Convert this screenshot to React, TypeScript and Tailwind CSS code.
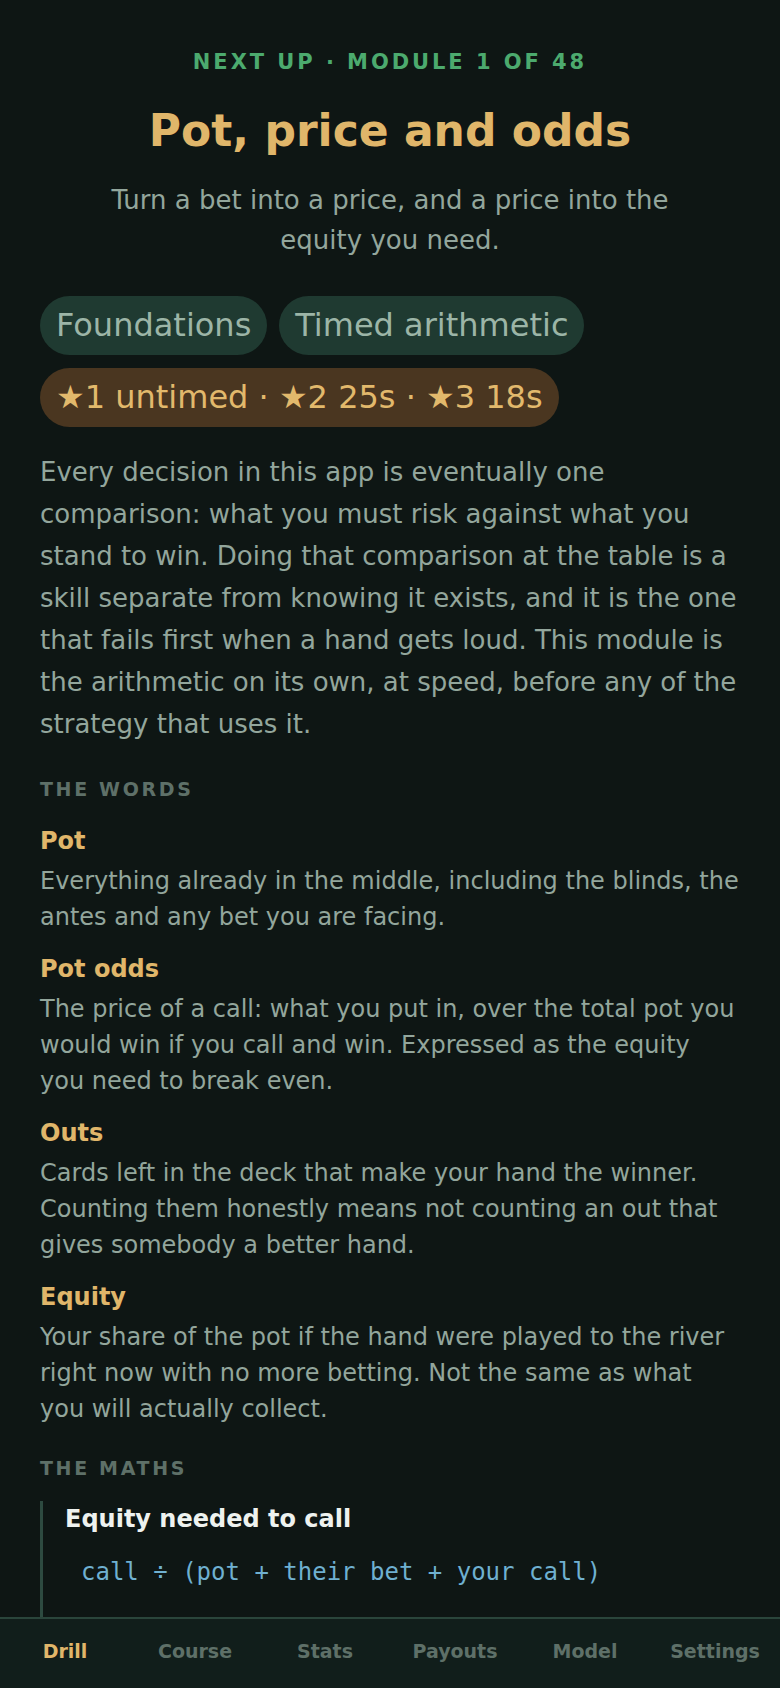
import React from 'react';

const terms = [
  {
    name: 'Pot',
    text: 'Everything already in the middle, including the blinds, the antes and any bet you are facing.',
  },
  {
    name: 'Pot odds',
    text: 'The price of a call: what you put in, over the total pot you would win if you call and win. Expressed as the equity you need to break even.',
  },
  {
    name: 'Outs',
    text: 'Cards left in the deck that make your hand the winner. Counting them honestly means not counting an out that gives somebody a better hand.',
  },
  {
    name: 'Equity',
    text: 'Your share of the pot if the hand were played to the river right now with no more betting. Not the same as what you will actually collect.',
  },
];

const tabs = ['Drill', 'Course', 'Stats', 'Payouts', 'Model', 'Settings'];

const App: React.FC = () => {
  return (
    <div
      className="h-[1688px] flex flex-col bg-[#0e1614] text-[#93a69c]"
      style={{ fontFamily: '"DejaVu Sans", Verdana, sans-serif' }}
    >
      <main className="flex-1 overflow-hidden px-[40px] pt-[48px]">
        {/* header */}
        <div className="text-center">
          <div className="text-[21px] leading-[28px] font-bold tracking-[0.14em] text-[#4caa6e]">
            NEXT UP · MODULE 1 OF 48
          </div>
          <h1 className="mt-[31px] text-[44px] leading-[48px] font-bold text-[#e0b66a]">
            Pot, price and odds
          </h1>
          <p className="mt-[25px] mx-auto max-w-[600px] text-[26px] leading-[40px] text-[#93a69c]">
            Turn a bet into a price, and a price into the equity you need.
          </p>
        </div>

        {/* tags */}
        <div className="mt-[36px] flex flex-wrap gap-x-[12px] gap-y-[13px]">
          <span className="rounded-full bg-[#1f3a31] px-[16px] py-[12px] text-[32px] leading-[35px] text-[#9cb5a7]">
            Foundations
          </span>
          <span className="rounded-full bg-[#1f3a31] px-[16px] py-[12px] text-[32px] leading-[35px] text-[#9cb5a7]">
            Timed arithmetic
          </span>
          <span className="rounded-full bg-[#4a3620] px-[16px] py-[12px] text-[32px] leading-[35px] text-[#e2b96c]">
            ★1 untimed · ★2 25s · ★3 18s
          </span>
        </div>

        <p className="mt-[24px] text-[26px] leading-[42px] text-[#93a69c]">
          Every decision in this app is eventually one comparison: what you must risk against what you stand to win.
          Doing that comparison at the table is a skill separate from knowing it exists, and it is the one that fails
          first when a hand gets loud. This module is the arithmetic on its own, at speed, before any of the strategy
          that uses it.
        </p>

        <h2 className="mt-[30px] text-[19px] leading-[28px] font-bold tracking-[0.14em] text-[#5e7068]">THE WORDS</h2>

        <dl className="mt-[22px] flex flex-col gap-[18px]">
          {terms.map(t => (
            <div key={t.name}>
              <dt className="text-[24px] leading-[32px] font-bold text-[#e0b66a]">{t.name}</dt>
              <dd className="mt-[6px] text-[24px] leading-[36px] text-[#93a69c]">{t.text}</dd>
            </div>
          ))}
        </dl>

        <h2 className="mt-[27px] text-[19px] leading-[28px] font-bold tracking-[0.14em] text-[#5e7068]">THE MATHS</h2>

        <div className="mt-[19px] border-l-[3px] border-[#2d4a40] pl-[22px] pb-[40px]">
          <div className="pt-[2px] text-[24px] leading-[32px] font-bold text-[#eef2ef]">Equity needed to call</div>
          <div
            className="mt-[20px] px-[16px] text-[24px] leading-[34px] text-[#6fb0d0]"
            style={{ fontFamily: '"DejaVu Sans Mono", monospace' }}
          >
            call ÷ (pot + their bet + your call)
          </div>
        </div>
      </main>

      <nav className="h-[71px] shrink-0 grid grid-cols-6 border-t-2 border-[#2a453b] bg-[#111e1b] pb-[4px]">
        {tabs.map(t => (
          <button
            key={t}
            className={`text-[19px] font-bold ${t === 'Drill' ? 'text-[#e0b66a]' : 'text-[#5e7068]'}`}
          >
            {t}
          </button>
        ))}
      </nav>
    </div>
  );
};

export default App;
